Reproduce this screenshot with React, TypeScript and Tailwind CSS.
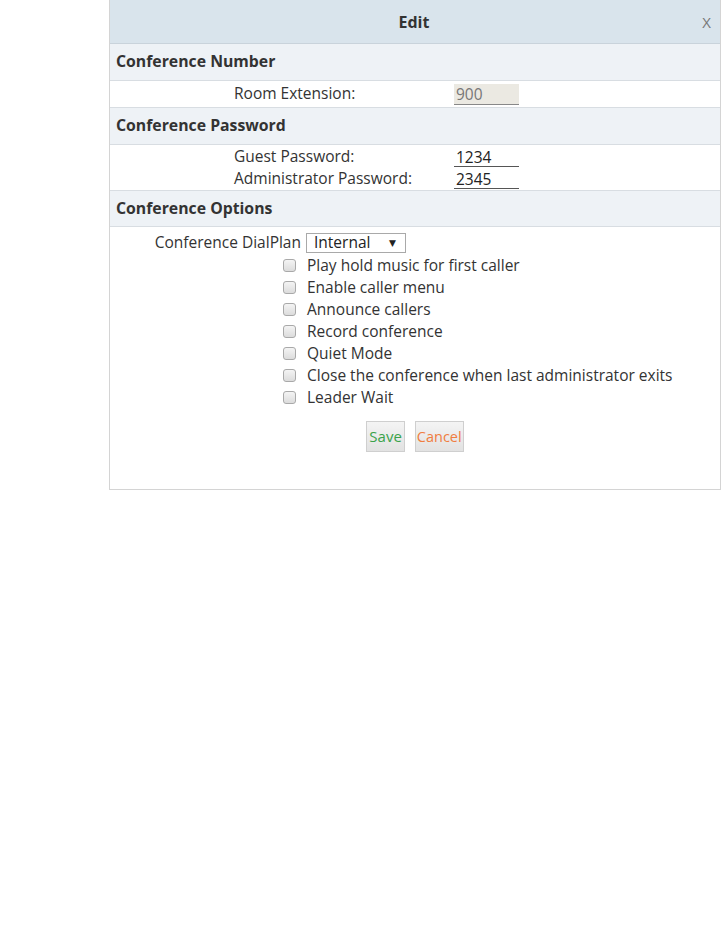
import React from "react";

const font = { fontFamily: '"Open Sans", "DejaVu Sans", sans-serif' };

function Checkbox() {
  return (
    <span className="inline-block w-[13px] h-[13px] mb-[2px] rounded-[3px] border border-[#a9a9a9] bg-gradient-to-b from-[#f4f4f4] to-[#dcdcdc]" />
  );
}

export default function App() {
  const options = [
    "Play hold music for first caller",
    "Enable caller menu",
    "Announce callers",
    "Record conference",
    "Quiet Mode",
    "Close the conference when last administrator exits",
    "Leader Wait",
  ];
  return (
    <div className="w-[721px] h-[941px] bg-white text-[15.5px] text-[#333]" style={font}>
      <div className="ml-[109px] w-[612px] h-[490px] border-l border-r border-b border-[#d4d4d4] flex flex-col">
        <div className="h-[44px] bg-[#d9e4ec] border-b border-[#c9d3db] flex items-center relative">
          <div className="flex-1 text-center font-bold text-[16px] text-[#333] pr-[2px]">Edit</div>
          <div className="absolute right-[9px] top-[11px] text-[15px] text-[#777]">X</div>
        </div>
        <div className="h-[37px] bg-[#eef2f6] border-b border-[#d8dde2] flex items-center pl-[6px] font-bold text-[15.8px]">Conference Number</div>
        <div className="h-[26px] flex items-center">
          <div className="pl-[124px] w-[344px]">Room Extension:</div>
          <div className="w-[65px] h-[21px] bg-[#ebe9e2] border-b border-[#888] text-[#777] pl-[2px] leading-[21px]">900</div>
        </div>
        <div className="h-[38px] bg-[#eef2f6] border-t border-b border-[#d8dde2] flex items-center pl-[6px] font-bold text-[15.8px]">Conference Password</div>
        <div className="h-[45px] flex flex-col justify-center">
          <div className="flex items-center h-[22px]">
            <div className="pl-[124px] w-[344px]">Guest Password:</div>
            <div className="w-[65px] h-[20px] border-b border-[#555] text-[#222] pl-[2px] leading-[20px]">1234</div>
          </div>
          <div className="flex items-center h-[22px]">
            <div className="pl-[124px] w-[344px]">Administrator Password:</div>
            <div className="w-[65px] h-[20px] border-b border-[#555] text-[#222] pl-[2px] leading-[20px]">2345</div>
          </div>
        </div>
        <div className="h-[37px] bg-[#eef2f6] border-t border-b border-[#d8dde2] flex items-center pl-[6px] font-bold text-[15.8px]">Conference Options</div>
        <div className="flex flex-col pt-[5px]">
          <div className="flex items-center h-[22px]">
            <div className="w-[196px] pr-[5px] text-right">Conference DialPlan</div>
            <div className="w-[100px] h-[20px] border border-[#a9a9a9] flex items-center justify-between pl-[7px] pr-[9px] text-[#222] text-[15.5px]">
              <span>Internal</span>
              <span className="text-[9px]">▼</span>
            </div>
          </div>
          <div className="flex flex-col pl-[173px] pt-[1px]">
            {options.map((o) => (
              <div key={o} className="flex items-center h-[22px] gap-[11px]">
                <Checkbox />
                <span className="text-[15.5px]">{o}</span>
              </div>
            ))}
          </div>
          <div className="flex justify-center gap-[10px] mt-[12px]">
            <div className="h-[31px] px-[2px] flex items-center border border-[#cfcfcf] bg-gradient-to-b from-[#f4f4f4] to-[#e2e2e2] text-[#3aa34a] text-[15px]">Save</div>
            <div className="h-[31px] px-[1px] flex items-center border border-[#cfcfcf] bg-gradient-to-b from-[#f4f4f4] to-[#e2e2e2] text-[#f07d40] text-[14.5px]">Cancel</div>
          </div>
        </div>
      </div>
    </div>
  );
}
